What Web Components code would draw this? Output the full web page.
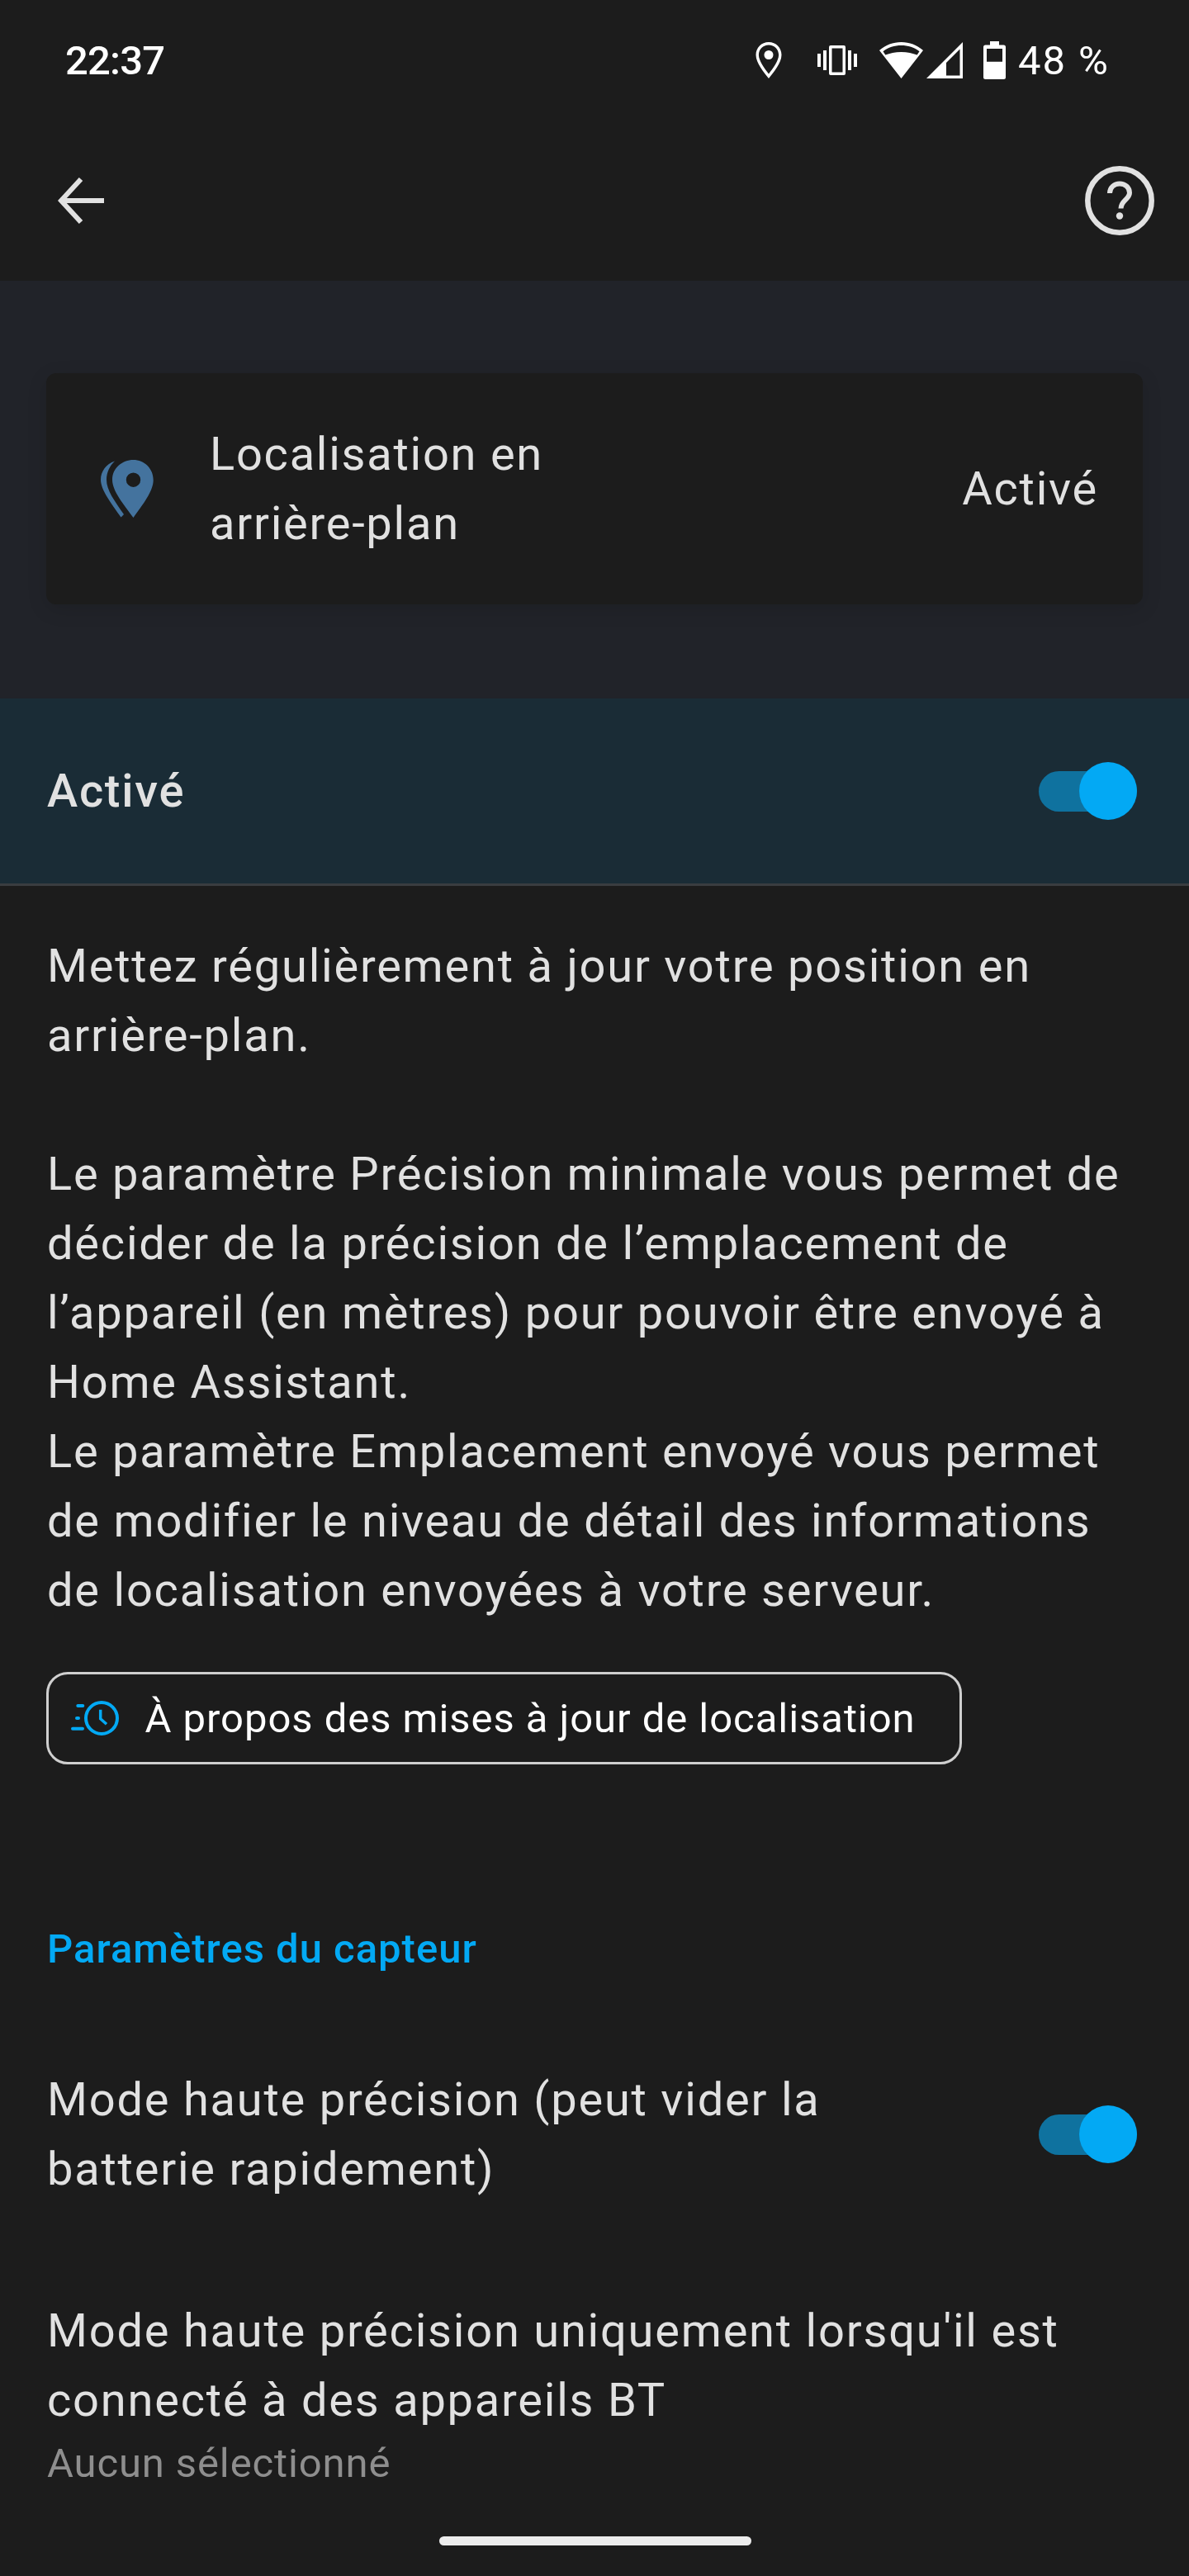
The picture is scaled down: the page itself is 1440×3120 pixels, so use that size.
<!DOCTYPE html>
<html lang="fr">
<head>
<meta charset="utf-8">
<title>Localisation en arrière-plan</title>
<style>
  html, body { margin: 0; padding: 0; background: #1c1c1c; }
  body { width: 1440px; height: 3120px; overflow: hidden; position: relative; font-family: Roboto, "Liberation Sans", sans-serif; color: #e1e1e1; }
</style>
</head>
<body>
<status-bar></status-bar>
<app-bar></app-bar>
<sensor-summary state="Activé">Localisation en<br>arrière-plan</sensor-summary>
<enable-row>Activé</enable-row>
<text-block>
  Mettez régulièrement à jour votre position en<br>arrière-plan.<br><br>Le paramètre Précision minimale vous permet de<br>décider de la précision de l’emplacement de<br>l’appareil (en mètres) pour pouvoir être envoyé à<br>Home Assistant.<br>Le paramètre Emplacement envoyé vous permet<br>de modifier le niveau de détail des informations<br>de localisation envoyées à votre serveur.
</text-block>
<outline-button>À propos des mises à jour de localisation</outline-button>
<section-title>Paramètres du capteur</section-title>
<setting-row switch>Mode haute précision (peut vider la<br>batterie rapidement)</setting-row>
<setting-row secondary="Aucun sélectionné">Mode haute précision uniquement lorsqu'il est<br>connecté à des appareils BT</setting-row>
<nav-handle></nav-handle>

<script>
// petit helper pour ne pas répéter attachShadow partout
const mount = (el, html) => {
  el.attachShadow({ mode: 'open' });
  el.shadowRoot.innerHTML = html;
};

class StatusBar extends HTMLElement {
  connectedCallback() {
    mount(this, `
      <style>
        :host { display: flex; align-items: center; height: 146px; padding: 0 96px 0 79px; box-sizing: border-box; color: #fff; font: 500 49px Roboto, sans-serif; }
        .time { flex: 1; letter-spacing: -.8px; }
        .icons { display: flex; align-items: center; }
        svg { display: block; fill: #fff; }
        .pct { margin-left: 15px; letter-spacing: 2px; font-weight: 400; }
      </style>
      <span class="time">22:37</span>
      <div class="icons">
        <svg width="32" height="44" viewBox="0 0 32 44" style="margin-right:43px"><path fill-rule="evenodd" d="M16 0C7.2 0 .5 6.8.5 15.5.5 25 10 36.500 16 44c6-7.500 15.500-19 15.500-28.500C31.500 6.800 24.800 0 16 0zm0 3.400c6.900 0 12.100 5.300 12.100 12.100 0 6.800-6.700 16-12.100 23-5.400-7-12.100-16.200-12.100-23C3.900 8.700 9.100 3.400 16 3.400z"/><circle cx="16" cy="15.500" r="5.500"/></svg>
        <svg width="48" height="36" viewBox="0 0 48 36" style="margin-right:27px"><path fill-rule="evenodd" d="M0 10h4v16H0zM7 6h4v24H7zM44 10h4v16h-4zM37 6h4v24h-4zM16 0h16a2 2 0 0 1 2 2v32a2 2 0 0 1-2 2H16a2 2 0 0 1-2-2V2a2 2 0 0 1 2-2zm1.500 3.500v29h13v-29z"/></svg>
        <svg width="53" height="44" viewBox="0 0 53 44" style="margin-right:4px"><path fill-rule="evenodd" d="M26.500 0C16.500 0 7.500 3.500 0 10l26.500 34L53 10C45.500 3.500 36.500 0 26.500 0zM26.500 4c8.300 0 15.800 2.500 22 7.200l-2.800 4.300C40.500 13.800 33.800 12 26.500 12S12.500 13.800 7.300 15.500l-2.800-4.300C10.700 6.500 18.200 4 26.500 4z"/></svg>
        <svg width="44" height="44" viewBox="0 0 44 44" style="margin-right:25px"><path fill-rule="evenodd" d="M44 0v44H0zM40.500 8.500 24 25v15.500h16.500z"/></svg>
        <svg width="27" height="46" viewBox="0 0 27 46" style="margin-bottom:1px"><path fill-rule="evenodd" d="M8 0h11v4.500h5.500a2.500 2.500 0 0 1 2.500 2.500v36.500a2.500 2.500 0 0 1-2.500 2.500h-22A2.500 2.500 0 0 1 0 43.500V7a2.500 2.500 0 0 1 2.500-2.500H8zM4 9v15.700h19V9z"/></svg>
        <span class="pct">48 %</span>
      </div>`);
  }
}

class AppBar extends HTMLElement {
  connectedCallback() {
    mount(this, `
      <style>
        :host { display: flex; align-items: center; justify-content: space-between; height: 194px; padding: 0 42px 0 70px; box-sizing: border-box; }
        svg { display: block; }
      </style>
      <svg width="56" height="56" viewBox="0 0 56 56" fill="none" stroke="#e1e1e1" stroke-width="6"><path d="M56 28H5M28 2 4 28l24 26"/></svg>
      <svg width="84" height="84" viewBox="0 0 84 84" fill="none" stroke="#e1e1e1" stroke-width="6.500">
        <circle cx="42" cy="42" r="38.700"/>
        <path d="M30 33c0-7 5.500-11.500 12-11.500S54 26 54 32.500c0 8-10.500 9-10.500 19" stroke-width="6"/>
        <circle cx="42" cy="60.500" r="4.200" fill="#e1e1e1" stroke="none"/>
      </svg>`);
  }
}

class SensorSummary extends HTMLElement {
  connectedCallback() {
    const state = this.getAttribute('state') || '';
    mount(this, `
      <style>
        :host { display: block; background: #212329; padding: 112px 56px 114px; height: 506px; box-sizing: border-box; }
        .card { display: flex; align-items: center; height: 280px; box-sizing: border-box; padding: 0 54px 0 66px; background: #1c1c1c; border-radius: 12px; box-shadow: 0 6px 24px rgba(0,0,0,.12); font: 400 56px/84px Roboto, sans-serif; letter-spacing: 1.75px; color: #e1e1e1; }
        svg { display: block; margin-right: 68px; flex: none; }
        .title { flex: 1; }
      </style>
      <div class="card">
        <svg width="64" height="70" viewBox="0 0 64 70"><path fill="#44739e" fill-rule="evenodd" d="M39.500 0C52.500 0 63.700 10 63.700 24.500 63.700 38 51 54 39.500 70 28 54 14 38 14 24 14 10 26 0 39.500 0zm0 15.500a8.700 8.700 0 1 0 0 17.400 8.700 8.700 0 0 0 0-17.400z"/><path fill="#44739e" d="M17 1.500C6.500 5 0 14 0 24c0 13 14 30 24.500 45.500l3.500-3.500C17 50 7 37 7 24 7 15 11 7 17 1.500z"/></svg>
        <span class="title"><slot></slot></span>
        <span>${state}</span>
      </div>`);
  }
}

class ToggleSwitch extends HTMLElement {
  connectedCallback() {
    mount(this, `
      <style>
        :host { display: block; position: relative; width: 119px; height: 70px; flex: none; }
        .track { position: absolute; left: 0; right: 0; top: 10.500px; height: 49px; border-radius: 25px; background: #0f729f; }
        .thumb { position: absolute; right: 0; top: 0; width: 70px; height: 70px; border-radius: 50%; background: #03a9f4; }
      </style>
      <div class="track"></div><div class="thumb"></div>`);
  }
}

class EnableRow extends HTMLElement {
  connectedCallback() {
    mount(this, `
      <style>
        :host { display: flex; align-items: center; justify-content: space-between; height: 227px; box-sizing: border-box; padding: 0 63px 0 57px; background: #1a2c36; border-bottom: 3.500px solid #3a3d40; font: 500 56px Roboto, sans-serif; letter-spacing: 1.75px; color: #e1e1e1; }
      </style>
      <span><slot></slot></span>
      <toggle-switch></toggle-switch>`);
  }
}

class TextBlock extends HTMLElement {
  connectedCallback() {
    mount(this, `
      <style>
        :host { display: block; padding: 55px 57px 57px; font: 400 56px/84px Roboto, sans-serif; letter-spacing: 1.78px; color: #e1e1e1; }
      </style>
      <slot></slot>`);
  }
}

class OutlineButton extends HTMLElement {
  connectedCallback() {
    mount(this, `
      <style>
        :host { display: flex; align-items: center; width: 1109px; height: 112px; margin-left: 56px; box-sizing: border-box; border: 3.500px solid #cfcfcf; border-radius: 26px; padding-left: 26.500px; font: 400 49px Roboto, sans-serif; letter-spacing: .95px; color: #fff; }
        svg { display: block; margin-right: 32px; flex: none; }
      </style>
      <svg width="58" height="42" viewBox="0 0 58 42" fill="none" stroke="#03a9f4" stroke-width="4" stroke-linecap="round">
        <circle cx="37" cy="21" r="19"/>
        <path d="M35.700 10.700v11l7.300 6.600" stroke-width="3.500" stroke-linecap="butt"/>
        <path d="M8.300 6h6M7 21h2M2 33.700h12"/>
      </svg>
      <slot></slot>`);
  }
}

class SectionTitle extends HTMLElement {
  connectedCallback() {
    mount(this, `
      <style>
        :host { display: block; padding: 182px 57px 0; font: 500 49px/84px Roboto, sans-serif; letter-spacing: 1px; color: #03a9f4; }
      </style>
      <slot></slot>`);
  }
}

class SettingRow extends HTMLElement {
  connectedCallback() {
    const sec = this.getAttribute('secondary');
    const sw = this.hasAttribute('switch');
    mount(this, `
      <style>
        :host { display: flex; align-items: center; justify-content: space-between; padding: 0 63px 0 57px; margin-top: 112px; font: 400 56px/84px Roboto, sans-serif; letter-spacing: 1.78px; color: #e1e1e1; }
        :host([switch]) { margin-top: 98px; }
        .sec { font-size: 49px; line-height: 70px; letter-spacing: .875px; color: #8e8e8e; }
      </style>
      <div>
        <div><slot></slot></div>
        ${sec ? `<div class="sec">${sec}</div>` : ''}
      </div>
      ${sw ? '<toggle-switch></toggle-switch>' : ''}`);
  }
}

class NavHandle extends HTMLElement {
  connectedCallback() {
    mount(this, `
      <style>
        :host { display: block; position: absolute; left: 532px; bottom: 37px; width: 378px; height: 11px; border-radius: 6px; background: #ececec; }
      </style>`);
  }
}

customElements.define('status-bar', StatusBar);
customElements.define('app-bar', AppBar);
customElements.define('sensor-summary', SensorSummary);
customElements.define('toggle-switch', ToggleSwitch);
customElements.define('enable-row', EnableRow);
customElements.define('text-block', TextBlock);
customElements.define('outline-button', OutlineButton);
customElements.define('section-title', SectionTitle);
customElements.define('setting-row', SettingRow);
customElements.define('nav-handle', NavHandle);
</script>
</body>
</html>
